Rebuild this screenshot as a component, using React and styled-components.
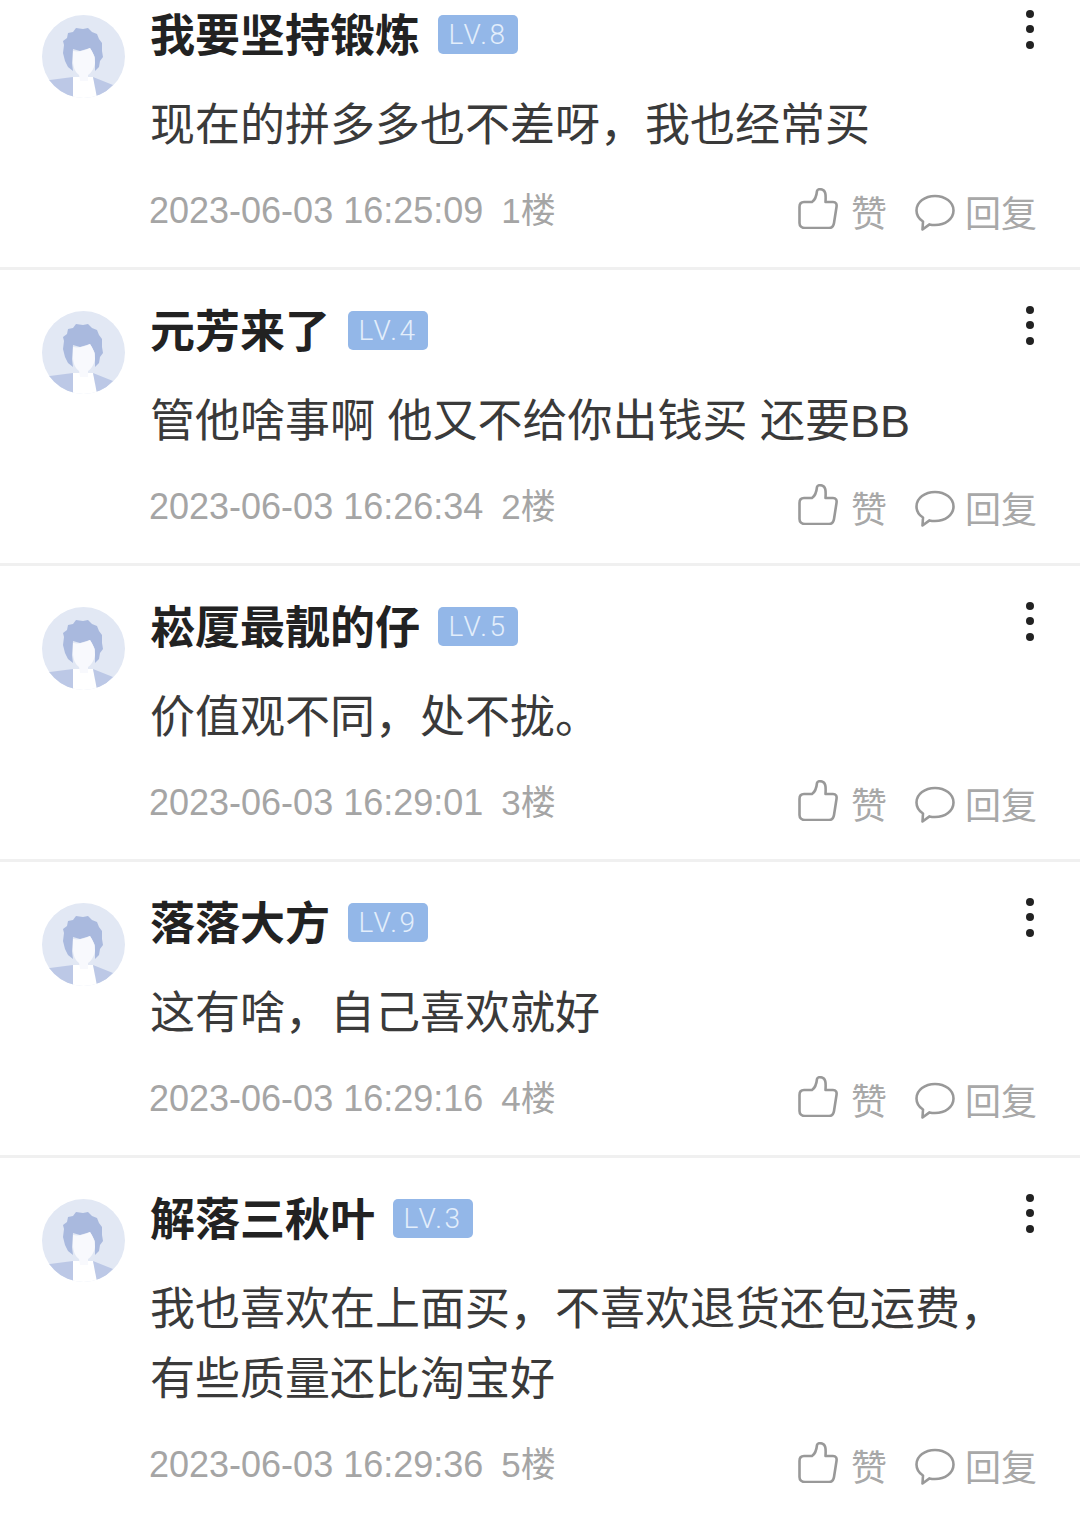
import React from 'react'
import styled, { createGlobalStyle } from 'styled-components'

const GlobalStyle = createGlobalStyle`
  html, body {
    margin: 0;
    padding: 0;
    background: #fff;
  }
  body {
    font-family: 'Liberation Sans', 'Noto Sans CJK SC', sans-serif;
    overflow: hidden;
  }
`

const Page = styled.div`
  width: 1080px;
  height: 1514px;
  overflow: hidden;
  background: #fff;
`

const Row = styled.div`
  display: flex;
  box-sizing: border-box;
  padding: 41px 44px 0 42px;
  min-height: 296px;
  border-bottom: 3px solid #f0f0f0;

  &:first-child {
    padding-top: 15px;
    min-height: 270px;
  }
  &:last-child {
    border-bottom: none;
  }
`

const AvatarWrap = styled.div`
  flex: none;
  width: 83px;
  height: 83px;
  margin-right: 25px;
`

const Main = styled.div`
  flex: 1;
  min-width: 0;
`

const NameLine = styled.div`
  display: flex;
  align-items: center;
  height: 40px;
`

const Name = styled.span`
  font-family: 'Noto Sans CJK SC', sans-serif;
  font-weight: 700;
  font-size: 45px;
  line-height: 40px;
  color: #222;
  position: relative;
  top: -2px;
`

const Level = styled.span`
  margin-left: 18px;
  margin-top: -2px;
  width: 80px;
  height: 39px;
  border-radius: 5px;
  background: #93b7e8;
  color: #e3eefb;
  font-family: 'Roboto', sans-serif;
  font-weight: 300;
  font-size: 28px;
  letter-spacing: 2.5px;
  line-height: 39px;
  text-align: center;
`

const More = styled.div`
  margin-left: auto;
  margin-right: 2px;
  margin-top: -12px;
  display: flex;
  flex-direction: column;
  gap: 7.5px;
  align-items: center;
  width: 8px;
`

const Dot = styled.i`
  display: block;
  width: 8px;
  height: 8px;
  border-radius: 50%;
  background: #222;
`

const Body = styled.div`
  margin-top: 36px;
  font-family: 'Liberation Sans', 'Noto Sans CJK SC', sans-serif;
  font-size: 45px;
  line-height: 70px;
  color: #3a3a3a;
`

const Meta = styled.div`
  display: flex;
  align-items: center;
  margin-top: 30px;
  height: 40px;
  margin-left: -1px;
`

const Time = styled.span`
  font-size: 36px;
  line-height: 40px;
  color: #a5a5a5;
`

const Floor = styled.span`
  margin-left: 18px;
  font-size: 35px;
  line-height: 40px;
  color: #a5a5a5;
`

const Actions = styled.div`
  margin-left: auto;
  margin-right: -1px;
  display: flex;
  align-items: center;
  color: #a8a8a8;
  font-size: 36px;
  line-height: 40px;
  font-family: 'Noto Sans CJK SC', sans-serif;
  font-weight: 400;
`

const Action = styled.div`
  display: flex;
  align-items: center;
  margin-left: ${({ $gap }) => $gap || 0}px;

  & > svg {
    flex: none;
    margin-right: ${({ $iconGap }) => $iconGap}px;
    margin-top: ${({ $iconShift }) => $iconShift}px;
  }
`

const Avatar = ({ id }) => (
  <svg width="83" height="83" viewBox="0 0 83 83">
    <defs>
      <clipPath id={id}>
        <circle cx="41.5" cy="41.5" r="41.5" />
      </clipPath>
    </defs>
    <g clipPath={`url(#${id})`}>
      <rect width="83" height="83" fill="#e2e8f4" />
      <path d="M0 66 L31 62 L31 83 L0 83 Z" fill="#bcc8e6" />
      <path d="M31 62 L51 62 L57 83 L31 83 Z" fill="#fff" />
      <path d="M51 62 L71 70 L57 83 L55 83 Z" fill="#bcc8e6" />
      <path
        d="M23 46 L21 38 L22 30 L21 26 L25 23 L26 18 L31 17 L34 13 L41 14 L46 13 L50 17 L55 19 L57 24 L60 28 L60 36 L61 42 L58 46 L57 52 L53 56 L53 42 L48 33 L38 36 L31 34 L30 48 L31 56 L26 52 Z"
        fill="#a9b9de"
      />
      <path
        d="M31 36 C36 37 42 36 48 33 C51 37 53 42 53 48 C52 54 49 58 46 60 L46 66 L38 66 L37 60 C33 57 31 52 31 46 Z"
        fill="#f8f9fd"
      />
    </g>
  </svg>
)

const ThumbIcon = () => (
  <svg width="40" height="41" viewBox="0 0 40 41" fill="none" stroke="#999" strokeWidth="2.6" strokeLinejoin="round" strokeLinecap="round">
    <path d="M6 14 H14 C17 12 18.5 8 19 3 C19.5 1 22 1 24 1.5 C27.5 2.5 28 6 27.5 14 H35 C38 14 39 16 38.5 19 L36 35 C35.5 38 33.5 40 31 40 H7 C3.5 40 1.5 38 1.5 35 V19 C1.5 16 3 14 6 14 Z" />
  </svg>
)

const BubbleIcon = () => (
  <svg width="40" height="38" viewBox="0 0 40 38" fill="none" stroke="#999" strokeWidth="2.6" strokeLinejoin="round" strokeLinecap="round">
    <path d="M20 2 C30 2 38.5 8 38.5 16.5 C38.5 25 30 31 20 31 C18 31 16 30.8 14.5 30.4 L7.5 35.5 L8 27.5 C4 25 1.5 21 1.5 16.5 C1.5 8 10 2 20 2 Z" />
  </svg>
)

const comments = [
  { name: '我要坚持锻炼', level: 'LV.8', body: ['现在的拼多多也不差呀，我也经常买'], time: '2023-06-03 16:25:09', floor: '1楼' },
  { name: '元芳来了', level: 'LV.4', body: ['管他啥事啊 他又不给你出钱买 还要BB'], time: '2023-06-03 16:26:34', floor: '2楼' },
  { name: '崧厦最靓的仔', level: 'LV.5', body: ['价值观不同，处不拢。'], time: '2023-06-03 16:29:01', floor: '3楼' },
  { name: '落落大方', level: 'LV.9', body: ['这有啥，自己喜欢就好'], time: '2023-06-03 16:29:16', floor: '4楼' },
  { name: '解落三秋叶', level: 'LV.3', body: ['我也喜欢在上面买，不喜欢退货还包运费，', '有些质量还比淘宝好'], time: '2023-06-03 16:29:36', floor: '5楼' },
]

const Comment = ({ name, level, body, time, floor }) => (
  <Row>
    <AvatarWrap>
      <Avatar id={`avatar-${floor}`} />
    </AvatarWrap>
    <Main>
      <NameLine>
        <Name>{name}</Name>
        <Level>{level}</Level>
        <More>
          <Dot />
          <Dot />
          <Dot />
        </More>
      </NameLine>
      <Body>
        {body.map((line) => (
          <div key={line}>{line}</div>
        ))}
      </Body>
      <Meta>
        <Time>{time}</Time>
        <Floor>{floor}</Floor>
        <Actions>
          <Action $iconGap={13} $iconShift={-5}>
            <ThumbIcon />
            赞
          </Action>
          <Action $gap={28} $iconGap={10} $iconShift={4}>
            <BubbleIcon />
            回复
          </Action>
        </Actions>
      </Meta>
    </Main>
  </Row>
)

const App = () => (
  <Page>
    <GlobalStyle />
    {comments.map((c) => (
      <Comment key={c.floor} {...c} />
    ))}
  </Page>
)

export default App
